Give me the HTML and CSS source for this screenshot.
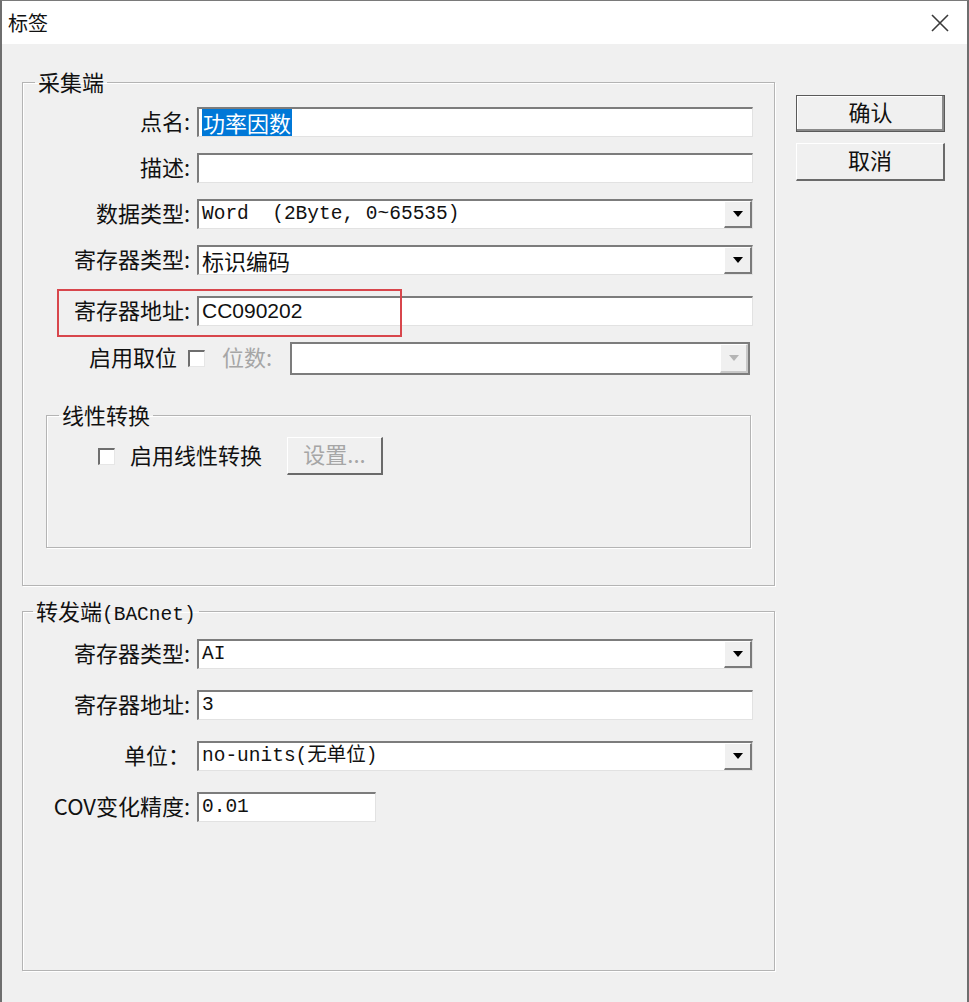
FILE: index.html
```html
<!DOCTYPE html>
<html lang="zh-CN">
<head>
    <meta charset="UTF-8">
    <meta name="viewport" content="width=device-width, initial-scale=1.0">
    <title>标签</title>
    <link rel="stylesheet" href="styles.css">
</head>
<body>

    <div class="window">
        <div class="titlebar">
            <span class="title">标签</span>
            <svg class="close" width="18" height="18" viewBox="0 0 18 18">
                <path d="M1 1 L17 17 M17 1 L1 17" stroke="#3a3a3a" stroke-width="1.6" fill="none"/>
            </svg>
        </div>

        <div class="dialog">
            <div class="main">
                <!-- 采集端 -->
                <fieldset class="group group-collect">
                    <legend>采集端</legend>

                    <div class="form-row">
                        <span class="label">点名:</span>
                        <div class="field"><span class="selected">功率因数</span></div>
                    </div>
                    <div class="form-row">
                        <span class="label">描述:</span>
                        <div class="field"></div>
                    </div>
                    <div class="form-row">
                        <span class="label">数据类型:</span>
                        <div class="field combo mono">Word&nbsp;&nbsp;(2Byte,&nbsp;0~65535)<span class="drop"><svg width="12" height="8" viewBox="0 0 12 8"><polygon points="1,1 11,1 6,7" fill="#000"/></svg></span></div>
                    </div>
                    <div class="form-row">
                        <span class="label">寄存器类型:</span>
                        <div class="field combo">标识编码<span class="drop"><svg width="12" height="8" viewBox="0 0 12 8"><polygon points="1,1 11,1 6,7" fill="#000"/></svg></span></div>
                    </div>
                    <div class="form-row row-addr">
                        <span class="label">寄存器地址:</span>
                        <div class="field sans">CC090202</div>
                        <div class="mark"></div>
                    </div>
                    <div class="form-row row-bits">
                        <span class="label label-short">启用取位</span>
                        <span class="check"></span>
                        <span class="muted">位数:</span>
                        <div class="field combo disabled"><span class="drop"><svg width="12" height="8" viewBox="0 0 12 8"><polygon points="1,1 11,1 6,7" fill="#b5b5b5"/></svg></span></div>
                    </div>

                    <fieldset class="group group-linear">
                        <legend>线性转换</legend>
                        <div class="linear-row">
                            <span class="check"></span>
                            <span class="check-label">启用线性转换</span>
                            <button class="btn btn-small" disabled>设置...</button>
                        </div>
                    </fieldset>
                </fieldset>

                <!-- 转发端 -->
                <fieldset class="group group-forward">
                    <legend>转发端<span class="mono">(BACnet)</span></legend>

                    <div class="form-row">
                        <span class="label">寄存器类型:</span>
                        <div class="field combo mono">AI<span class="drop"><svg width="12" height="8" viewBox="0 0 12 8"><polygon points="1,1 11,1 6,7" fill="#000"/></svg></span></div>
                    </div>
                    <div class="form-row">
                        <span class="label">寄存器地址:</span>
                        <div class="field mono">3</div>
                    </div>
                    <div class="form-row">
                        <span class="label">单位：</span>
                        <div class="field combo mono">no-units(无单位)<span class="drop"><svg width="12" height="8" viewBox="0 0 12 8"><polygon points="1,1 11,1 6,7" fill="#000"/></svg></span></div>
                    </div>
                    <div class="form-row">
                        <span class="label">COV变化精度:</span>
                        <div class="field field-short mono">0.01</div>
                    </div>
                </fieldset>
            </div>

            <div class="side">
                <button class="btn btn-default">确认</button>
                <button class="btn">取消</button>
            </div>
        </div>
    </div>

</body>
</html>
```

FILE: styles.css
```css
/* 对话框样式 */
body {
    margin: 0;
    font-family: "Noto Sans CJK SC", "Noto Sans", sans-serif;
    font-size: 22px;
    color: #111;
    background-color: #f0f0f0;
}

.window {
    width: 969px;
    height: 1002px;
    box-sizing: border-box;
    border-top: 1px solid #7a7a7a;
    border-left: 2px solid #6e6e6e;
    border-right: 2px solid #6e6e6e;
    background-color: #f0f0f0;
    overflow: hidden;
}

.titlebar {
    height: 43px;
    background-color: #ffffff;
    display: flex;
    align-items: center;
    justify-content: space-between;
    padding: 0 18px 0 6px;
}

.title {
    font-size: 20px;
    line-height: 24px;
    color: #111;
}

.dialog {
    display: flex;
    gap: 21px;
    padding: 26px 0 0 20px;
}

.main {
    width: 753px;
}

/* 分组框 */
.group {
    margin: 0;
    padding: 13px 21px 37px 0;
    border: 1px solid #b4b4b4;
    box-shadow: inset 1px 1px 0 #ffffff, 1px 1px 0 #ffffff;
    min-width: 0;
}

.group legend {
    height: 24px;
    margin-left: 12px;
    padding: 0 3px;
    font-size: 22px;
    line-height: 22px;
    white-space: nowrap;
}

.group legend .mono {
    line-height: 22px;
}

.group-linear {
    margin: 28px 2px 0 23px;
    padding: 10px 0 72px 0;
}

.group-forward {
    margin-top: 13px;
    padding: 16px 21px 148px 0;
}

.group-forward legend {
    margin-left: 10px;
}

/* 表单行 */
.form-row {
    display: flex;
    align-items: center;
    height: 30px;
}

.form-row + .form-row {
    margin-top: 16px;
}

.group-forward .form-row + .form-row {
    margin-top: 21px;
}

.row-addr {
    position: relative;
}

.form-row.row-addr {
    margin-top: 21px;
}

.row-bits {
    height: 33px;
}

.label {
    width: 167px;
    margin-right: 7px;
    padding-bottom: 5px;
    text-align: right;
    white-space: nowrap;
    line-height: 26px;
}

.label-short {
    width: 154px;
    margin-right: 11px;
}

.field {
    position: relative;
    flex: 1;
    height: 30px;
    box-sizing: border-box;
    background-color: #ffffff;
    border-top: 2px solid #7c7c7c;
    border-left: 2px solid #7c7c7c;
    border-right: 1px solid #e2e2e2;
    border-bottom: 1px solid #e2e2e2;
    padding-left: 3px;
    line-height: 26px;
    white-space: nowrap;
    overflow: hidden;
}

.field-short {
    flex: none;
    width: 179px;
}

.mono {
    font-family: "Liberation Mono", "Noto Sans CJK SC", monospace;
    font-size: 19.5px;
}

.sans {
    font-family: "Liberation Sans", sans-serif;
    font-size: 21px;
}

.selected {
    background-color: #0078d7;
    color: #ffffff;
    padding: 0 1px;
}

.combo {
    padding-right: 32px;
}

.drop {
    position: absolute;
    top: 0;
    right: 0;
    width: 28px;
    height: 27px;
    box-sizing: border-box;
    background-color: #f0f0f0;
    border-left: 1px solid #ffffff;
    border-top: 1px solid #ffffff;
    border-right: 2px solid #7a7a7a;
    border-bottom: 2px solid #7a7a7a;
    display: flex;
    align-items: center;
    justify-content: center;
}

.row-bits .field {
    flex: none;
    width: 460px;
    height: 33px;
    margin-left: auto;
    margin-right: 3px;
    border-right: 2px solid #7c7c7c;
    border-bottom: 2px solid #7c7c7c;
}

.row-bits .drop {
    height: 29px;
    border-right-color: #c8c8c8;
    border-bottom-color: #c8c8c8;
}

.muted {
    margin-left: 17px;
    padding-bottom: 5px;
    color: #a6a6a6;
    line-height: 26px;
}

/* 红色标注框 */
.mark {
    position: absolute;
    left: 34px;
    top: -7px;
    width: 345px;
    height: 48px;
    box-sizing: border-box;
    border: 2px solid #d8464c;
}

/* 复选框 */
.check {
    width: 17px;
    height: 17px;
    box-sizing: border-box;
    background-color: #ffffff;
    border-top: 2px solid #6e6e6e;
    border-left: 2px solid #6e6e6e;
    border-right: 1px solid #e6e6e6;
    border-bottom: 1px solid #e6e6e6;
    flex: none;
}

.linear-row {
    display: flex;
    align-items: center;
    height: 38px;
    padding-left: 51px;
}

.check-label {
    margin-left: 15px;
    padding-bottom: 5px;
    line-height: 26px;
}

/* 按钮 */
.side {
    display: flex;
    flex-direction: column;
    gap: 11px;
    padding-top: 25px;
}

.btn {
    width: 149px;
    height: 38px;
    box-sizing: border-box;
    font-family: inherit;
    font-size: 22px;
    color: #111;
    background-color: #f0f0f0;
    border-top: 1px solid #ffffff;
    border-left: 1px solid #ffffff;
    border-right: 2px solid #6a6a6a;
    border-bottom: 2px solid #6a6a6a;
    padding: 0 0 5px 0;
    line-height: 26px;
    cursor: pointer;
}

.btn-default {
    height: 37px;
    border: 1px solid #5a5a5a;
    box-shadow: inset -2px -2px 0 #8a8a8a, inset 1px 1px 0 #ffffff;
}

.btn-small {
    width: 96px;
    margin-left: 25px;
    color: #a6a6a6;
    cursor: default;
}
```
